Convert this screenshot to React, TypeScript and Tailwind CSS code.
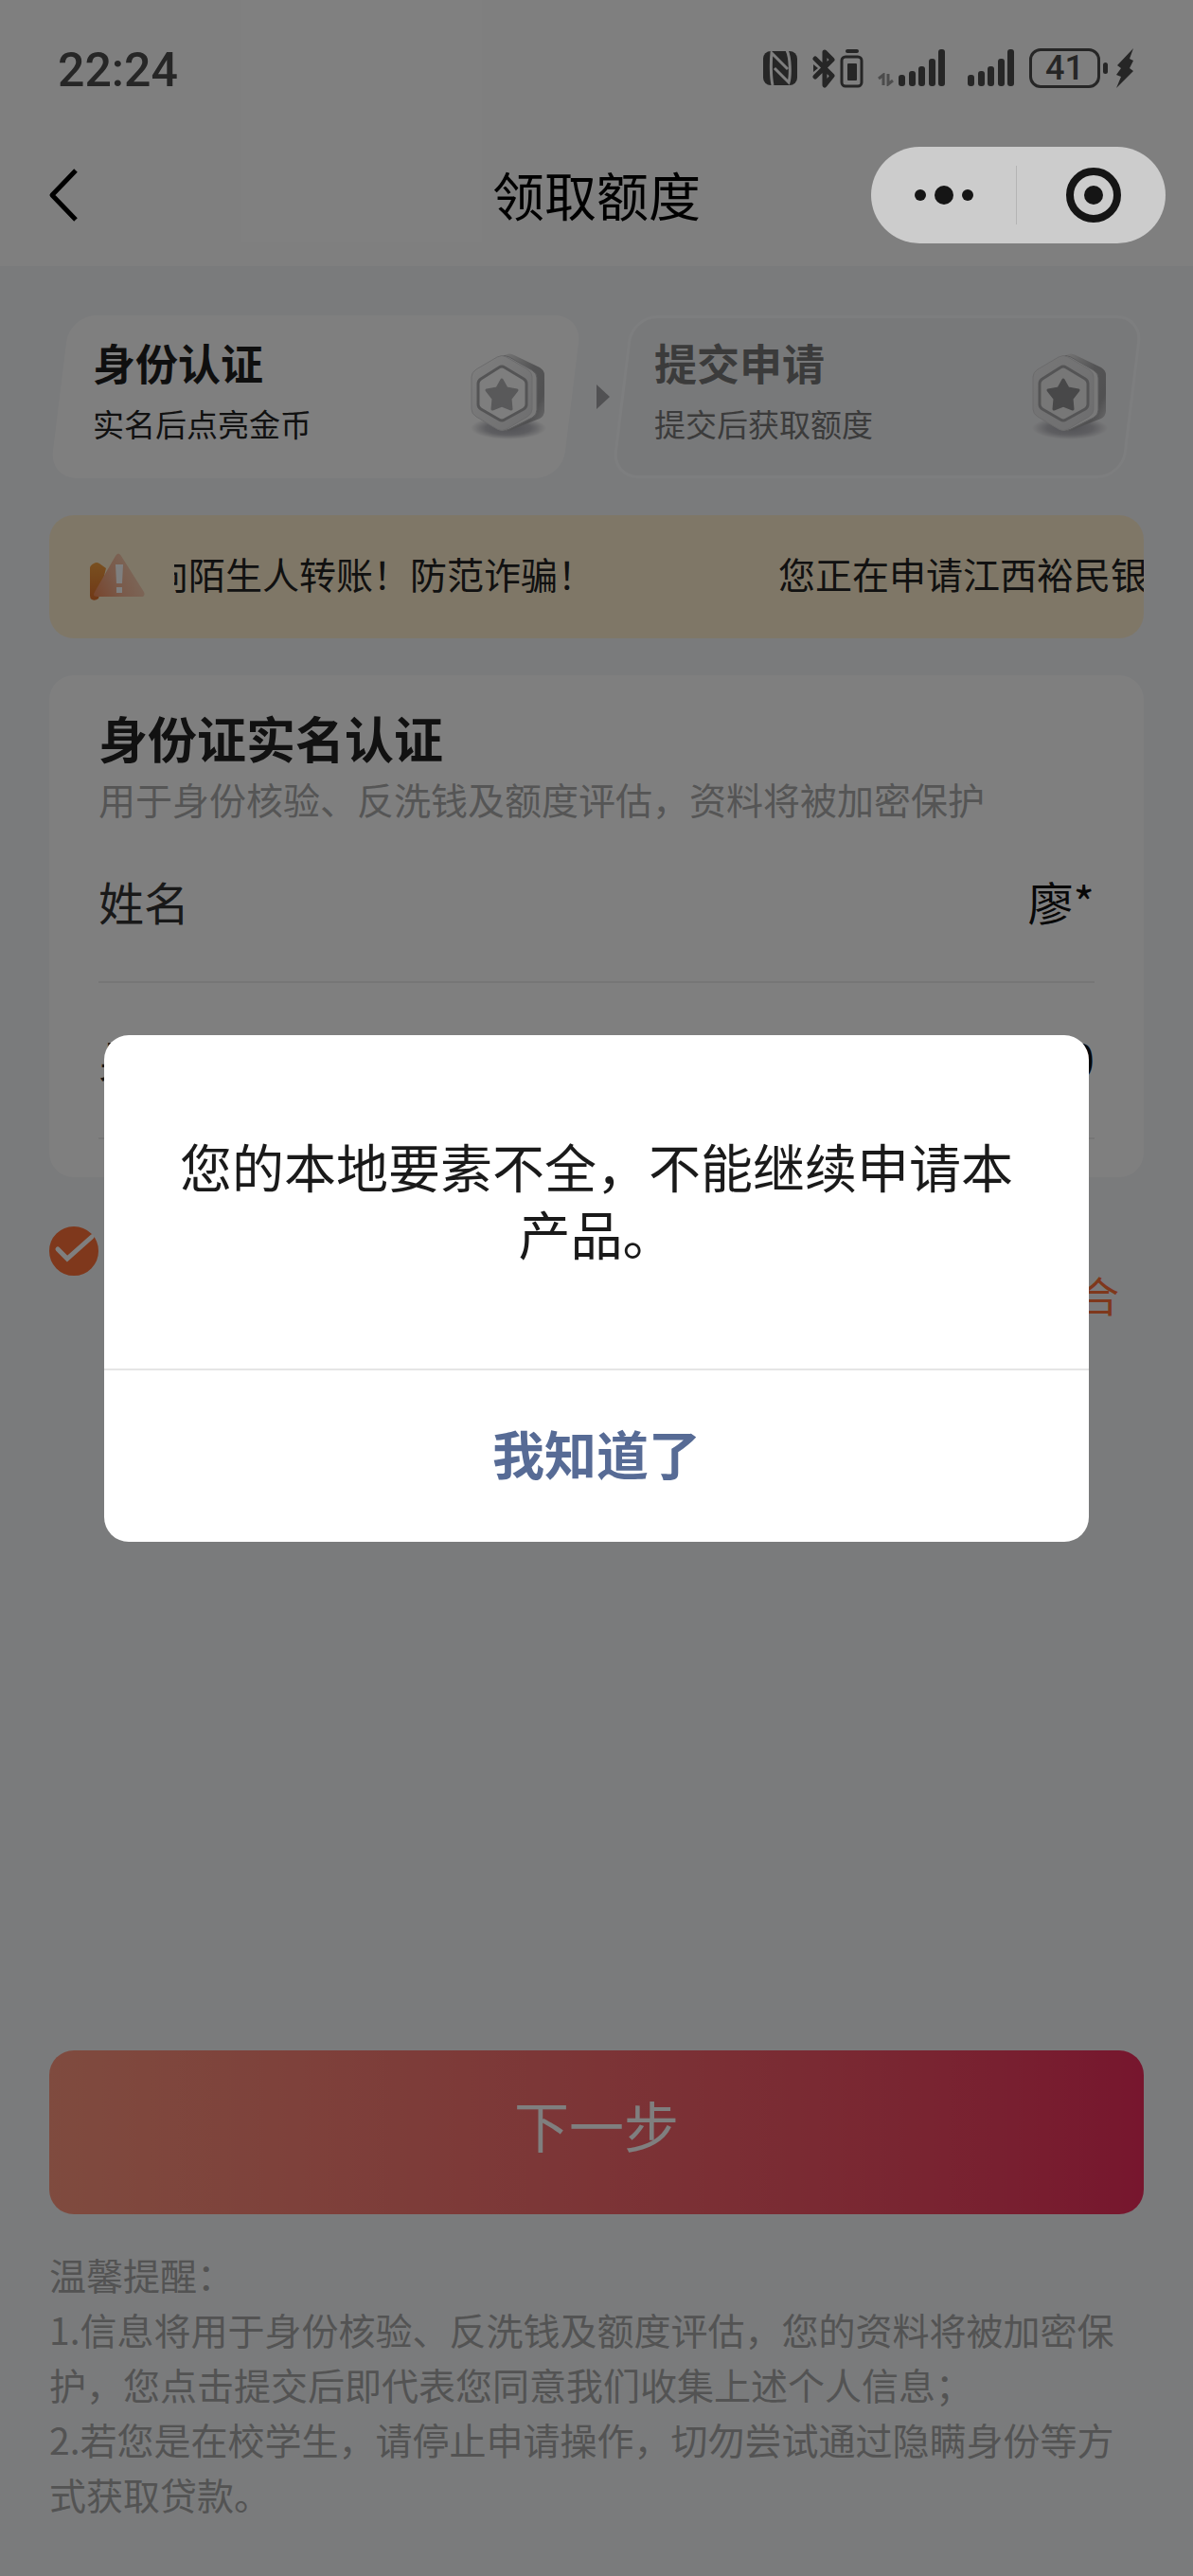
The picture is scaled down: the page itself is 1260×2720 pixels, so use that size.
import { useState } from 'react';
import { clsx } from 'clsx';

const steps = [
  { title: '身份认证', hint: '实名后点亮金币', active: true },
  { title: '提交申请', hint: '提交后获取额度', active: false },
];

const fields = [
  { label: '姓名', value: '廖*' },
  { label: '身份证号', value: '3****************0' },
];

function SignalBars() {
  return (
    <svg width="50" height="40" viewBox="0 0 50 40" fill="currentColor" aria-hidden="true">
      <rect x="0" y="27" width="7" height="12" rx="3" />
      <rect x="11" y="23" width="7" height="16" rx="3" />
      <rect x="21" y="18" width="7" height="21" rx="3" />
      <rect x="32" y="10" width="7" height="29" rx="3" />
      <rect x="42" y="0" width="7" height="39" rx="3" />
    </svg>
  );
}

function StatusBar() {
  return (
    <div className="flex h-36 items-center justify-between pl-[61px] pr-[62px] text-[#4c4c4c]">
      <time className="pt-1 font-['Roboto',sans-serif] text-[50px] font-medium leading-none">22:24</time>
      <div className="flex items-center">
        {/* NFC */}
        <svg className="mr-4" width="36" height="38" viewBox="0 0 36 38" aria-hidden="true">
          <rect y="1" width="36" height="36" rx="8" fill="currentColor" />
          <path d="M10 37C8 28 8 12 9 3l17 17" fill="none" stroke="#fff" strokeWidth="3" />
          <path d="M25 0c4 8 4 27 2 34L12 19" fill="none" stroke="#fff" strokeWidth="3" />
        </svg>
        {/* Bluetooth with device battery */}
        <svg className="mr-[15px]" width="54" height="42" viewBox="0 0 54 42" aria-hidden="true">
          <g fill="none" stroke="currentColor" strokeWidth="5" strokeLinecap="round" strokeLinejoin="round">
            <path d="M3 11l18 18-8 10V4l8 8L3 30" />
          </g>
          <path d="M1 17l5 4-5 4z" fill="currentColor" />
          <rect x="35" y="1" width="14" height="4" rx="2" fill="currentColor" />
          <rect x="31" y="9" width="21" height="31" rx="4" fill="none" stroke="currentColor" strokeWidth="3" />
          <rect x="37" y="16" width="10" height="18" rx="1" fill="currentColor" />
        </svg>
        <svg className="mr-1 mt-6" width="18" height="14" viewBox="0 0 18 14" fill="none" stroke="#999" strokeWidth="3" aria-hidden="true">
          <path d="M1 6l5-4v11M11 1v11l5-4" />
        </svg>
        <SignalBars />
        <span className="w-[23px]" />
        <SignalBars />
        <span className="ml-[15px] flex h-[42px] w-[75px] items-center justify-center rounded-[12px] border-3 border-current font-['Roboto',sans-serif] text-[36px] font-medium leading-none">
          41
        </span>
        <span className="ml-[3px] h-3 w-[5px] rounded-full bg-current" />
        <svg className="ml-2" width="20" height="42" viewBox="0 0 20 42" fill="currentColor" aria-hidden="true">
          <path d="M19 0L2 18l4 3-5 7 5 2-5 12 18-18-4-3 4-8-4-2z" />
        </svg>
      </div>
    </div>
  );
}

function NavBar() {
  return (
    <div className="grid h-[123px] grid-cols-[1fr_auto_1fr] items-center px-[29px]">
      <button type="button" aria-label="返回" className="justify-self-start pl-[22px]">
        <svg width="32" height="56" viewBox="0 0 32 56" fill="none" stroke="#000" strokeWidth="5" strokeLinejoin="round">
          <path d="M29 2L4 28l25 26" />
        </svg>
      </button>
      <h1 className="pb-1 text-[55px] leading-[64px] text-black">领取额度</h1>
      {/* The capsule stays above the mask */}
      <div className="relative z-20 flex h-[102px] w-[311px] items-center justify-self-end rounded-full bg-[#cccccc] text-[#151515]">
        <button type="button" aria-label="更多" className="flex h-full flex-1 items-center justify-center gap-[9px]">
          <span className="size-3 rounded-full bg-current" />
          <span className="size-5 rounded-full bg-current" />
          <span className="size-3 rounded-full bg-current" />
        </button>
        <span className="h-[62px] w-px bg-[#b4b4b4]" />
        <button type="button" aria-label="关闭" className="flex h-full flex-1 items-center justify-center pl-1">
          <span className="flex size-[58px] items-center justify-center rounded-full border-8 border-current">
            <span className="size-5 rounded-full bg-current" />
          </span>
        </button>
      </div>
    </div>
  );
}

function Badge({ active }: { active: boolean }) {
  const id = active ? 'on' : 'off';
  const star = active ? '#b2b2b4' : '#909092';
  const face = active ? '#fdfdfd' : '#eeeeef';

  return (
    <svg width="80" height="92" viewBox="0 0 80 92" aria-hidden="true">
      <defs>
        <linearGradient id={`side-${id}`} x1="0" y1="0" x2="1" y2="1">
          <stop offset="0" stopColor="#ececec" />
          <stop offset="0.45" stopColor="#a8a8aa" />
          <stop offset="0.75" stopColor="#a2a2a4" />
          <stop offset="1" stopColor="#e2e2e4" />
        </linearGradient>
        <linearGradient id={`face-${id}`} x1="0" y1="0" x2="1" y2="1">
          <stop offset="0" stopColor={face} />
          <stop offset="1" stopColor="#dcdcde" />
        </linearGradient>
        <radialGradient id={`shadow-${id}`}>
          <stop offset="0" stopColor="#a4a4ac" />
          <stop offset="0.6" stopColor="#bcbcc2" />
          <stop offset="1" stopColor="#bcbcc2" stopOpacity="0" />
        </radialGradient>
      </defs>
      <ellipse cx="40" cy="79" rx="40" ry="12" fill={`url(#shadow-${id})`} />
      <path d="M36 2q5-3 10 0l27 13q5 3 5 8v38q0 5-5 8L45 80q-5 3-10 0z" fill={`url(#side-${id})`} />
      <path d="M31 4q5-3 10 0l24 14q5 3 5 8v34q0 5-5 8L41 80q-5 3-10 0z" fill="#f2f2f3" stroke="#b8b8ba" strokeWidth="1" />
      <path d="M28 4q5-3 10 0l22 13q5 3 5 8v34q0 5-5 8L38 80q-5 3-10 0L6 67q-5-3-5-8V25q0-5 5-8z" fill={`url(#face-${id})`} stroke="#d6d6d8" strokeWidth="1" />
      <path d="M30 15q3-2 6 0l20 12q3 2 3 5v22q0 3-3 5L36 70q-3 2-6 0L11 59q-3-2-3-5V32q0-3 3-5z" fill={face} stroke="#a9a9ab" strokeWidth="3" />
      <path
        d="M33 28l5 9 11 2-7 9 1 11-10-4-10 4 1-11-7-9 11-2z"
        fill={star}
        stroke={star}
        strokeWidth="3"
        strokeLinejoin="round"
      />
    </svg>
  );
}

function StepCard({ title, hint, active }: { title: string; hint: string; active: boolean }) {
  return (
    <li className="relative flex h-[172px] flex-1 justify-between pl-[35px] pr-[27px]">
      <span
        className={clsx(
          'absolute inset-0 -skew-x-7 rounded-[28px]',
          active ? 'bg-white' : 'border-3 border-[#fbfcfe] bg-[#f1f2f4]'
        )}
      />
      <div className="relative pt-[18px]">
        <div className={clsx('text-[45px] font-bold leading-[64px]', active ? 'text-[#1e1e1e]' : 'text-[#777777]')}>
          {title}
        </div>
        <div className={clsx('text-[33px] leading-[64px]', active ? 'text-[#222222]' : 'text-[#777777]')}>{hint}</div>
      </div>
      <div className="relative pt-10">
        <Badge active={active} />
      </div>
    </li>
  );
}

function Notice() {
  return (
    <div className="flex h-[130px] items-center overflow-hidden rounded-[26px] bg-[#ffefcf] pl-[42px]">
      <svg className="shrink-0" width="60" height="52" viewBox="0 0 60 52" aria-hidden="true">
        <defs>
          <linearGradient id="warn-back" x1="0" y1="0" x2="0" y2="1">
            <stop offset="0" stopColor="#f2a040" />
            <stop offset="1" stopColor="#e0702c" />
          </linearGradient>
          <linearGradient id="warn-front" x1="0" y1="1" x2="1" y2="0.6">
            <stop offset="0" stopColor="#f08a58" />
            <stop offset="0.5" stopColor="#f4b494" />
            <stop offset="1" stopColor="#f8d0b4" />
          </linearGradient>
        </defs>
        <path d="M1 17q0-3 4-5 3-2 6 0l7 5-8 32q-4 3-7 1-2-1-2-4z" fill="url(#warn-back)" />
        <path d="M28 4q3-5 6 0l24 38q2 5-3 5H9q-6 0-3-5z" fill="url(#warn-front)" />
        <path d="M28 13h8l-1 20h-6zM29 37h6v6h-6z" fill="#fff" />
      </svg>
      <div className="ml-[30px] flex flex-1 overflow-hidden pb-2">
        <div className="-ml-6 flex gap-[194px] whitespace-nowrap text-[39px] leading-[60px] text-[#222222]">
          <span>向陌生人转账！防范诈骗！</span>
          <span>您正在申请江西裕民银行</span>
        </div>
      </div>
    </div>
  );
}

function IdentityCard() {
  return (
    <section className="rounded-[26px] bg-white px-[52px] pb-10 pt-8">
      <h2 className="text-[52px] font-bold leading-[68px] text-[#222222]">身份证实名认证</h2>
      <p className="text-[39px] leading-[60px] text-[#aaaaaa]">用于身份核验、反洗钱及额度评估，资料将被加密保护</p>
      <dl>
        {fields.map((field) => (
          <div key={field.label} className="flex h-[165px] items-center justify-between border-b-2 border-[#ececec] pb-2 text-[48px]">
            <dt className="text-[#333333]">{field.label}</dt>
            <dd className="text-[#111111]">{field.value}</dd>
          </div>
        ))}
      </dl>
    </section>
  );
}

function Agreement() {
  const [checked, setChecked] = useState(true);

  return (
    <label className="mt-[13px] flex items-start gap-[22px]">
      <span className="relative size-[52px] shrink-0">
        <input
          type="checkbox"
          checked={checked}
          onChange={(e) => setChecked(e.target.checked)}
          className="size-[52px] appearance-none rounded-full border-2 border-[#ff7038] checked:bg-[#ff7038]"
        />
        {checked && (
          <svg className="pointer-events-none absolute inset-0" width="52" height="52" viewBox="0 0 52 52" fill="none" stroke="#fff" strokeWidth="5" strokeLinecap="round">
            <path d="M9 24l10 10 26-23" />
          </svg>
        )}
      </span>
      <span className="text-[44px] leading-[48px] text-[#222222]">
        我已阅读并同意
        <br />
        <a href="#agreement" className="text-[#ff7038]">
          《个人信息授权书》《征信查询授权书》《借款额度综合
          <br />
          授信合同》
        </a>
      </span>
    </label>
  );
}

function Dialog({ onClose }: { onClose: () => void }) {
  return (
    <div className="absolute inset-0 z-10 flex items-center justify-center bg-black/50 px-[110px]">
      <div role="alertdialog" aria-modal="true" aria-describedby="dialog-text" className="w-full overflow-hidden rounded-[26px] bg-white">
        <p id="dialog-text" className="px-16 pb-[108px] pt-[102px] text-center text-[55px] leading-[71px] text-[#1a1a1a]">
          您的本地要素不全，不能继续申请本产品。
        </p>
        <button
          type="button"
          onClick={onClose}
          className="h-[183px] w-full border-t-2 border-[#e5e5e5] pb-2 text-[55px] font-bold text-[#576b95]"
        >
          我知道了
        </button>
      </div>
    </div>
  );
}

export default function App() {
  const [open, setOpen] = useState(true);

  return (
    <div className="relative flex min-h-screen flex-col bg-[#f4f6f8] font-['Noto_Sans_CJK_SC',sans-serif]">
      <header className="bg-white pb-[14px]">
        <StatusBar />
        <NavBar />
      </header>

      <main className="flex flex-col gap-[39px] px-[52px] pt-[52px]">
        <ol className="flex items-center px-[11px]">
          <StepCard {...steps[0]} />
          <li aria-hidden="true" className="flex w-[52px] justify-end pr-3">
            <svg width="14" height="26" viewBox="0 0 14 26" fill="#a2a2a6">
              <path d="M0 0l14 13L0 26z" />
            </svg>
          </li>
          <StepCard {...steps[1]} />
        </ol>
        <Notice />
        <IdentityCard />
        <Agreement />
      </main>

      <footer className="mt-auto px-[52px] pb-[58px]">
        <button
          type="button"
          className="h-[173px] w-full rounded-[26px] bg-linear-to-r from-[#ff967e] to-[#ee2c5c] pb-4 text-[58px] text-white"
        >
          下一步
        </button>
        <div className="pt-[34px] text-[39px] leading-[58px] text-[#a6a6a6]">
          <p>温馨提醒：</p>
          <p>1.信息将用于身份核验、反洗钱及额度评估，您的资料将被加密保护，您点击提交后即代表您同意我们收集上述个人信息；</p>
          <p>2.若您是在校学生，请停止申请操作，切勿尝试通过隐瞒身份等方式获取贷款。</p>
        </div>
      </footer>

      {open && <Dialog onClose={() => setOpen(false)} />}
    </div>
  );
}
